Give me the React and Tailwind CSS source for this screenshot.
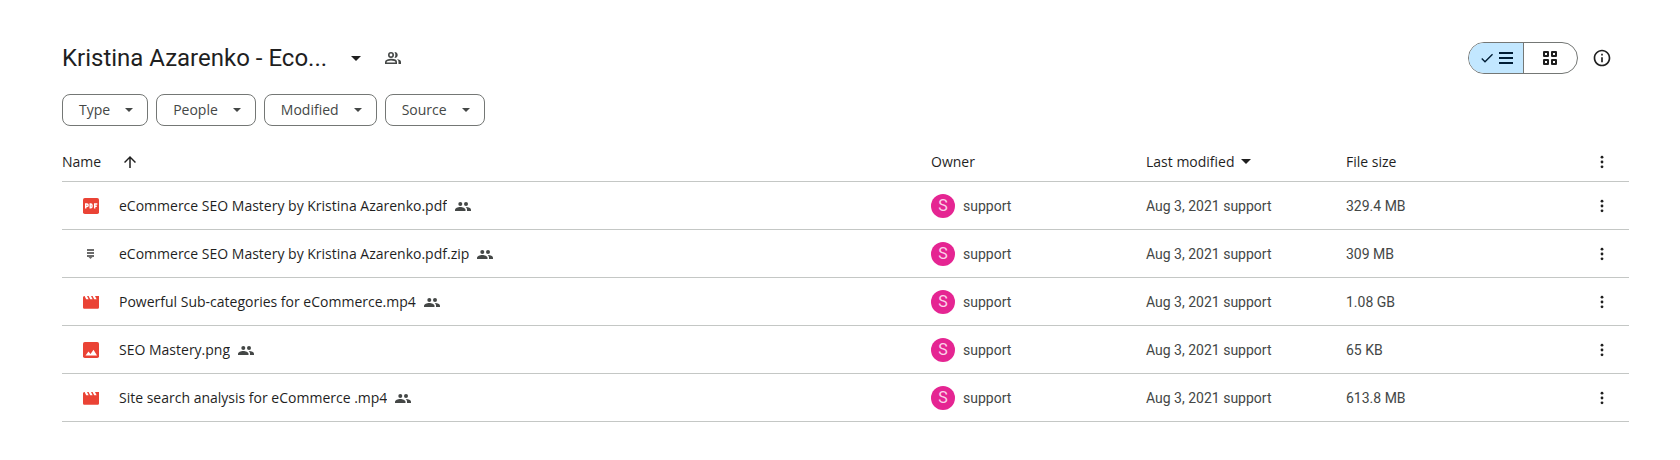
import { useState } from 'react';
import { MdArrowUpward, MdCheck, MdInfoOutline } from 'react-icons/md';

const filters = ['Type', 'People', 'Modified', 'Source'];

const files = [
  { name: 'eCommerce SEO Mastery by Kristina Azarenko.pdf', type: 'pdf', size: '329.4 MB' },
  { name: 'eCommerce SEO Mastery by Kristina Azarenko.pdf.zip', type: 'zip', size: '309 MB' },
  { name: 'Powerful Sub-categories for eCommerce.mp4', type: 'video', size: '1.08 GB' },
  { name: 'SEO Mastery.png', type: 'image', size: '65 KB' },
  { name: 'Site search analysis for eCommerce .mp4', type: 'video', size: '613.8 MB' },
];

function Caret({ className }) {
  return (
    <svg viewBox="0 0 10 5" className={className} fill="currentColor" aria-hidden="true">
      <path d="M0 0h10L5 5z" />
    </svg>
  );
}

function MoreIcon() {
  return (
    <svg viewBox="0 0 16 16" className="size-4" fill="currentColor" aria-hidden="true">
      <circle cx="8" cy="3.200" r="1.400" />
      <circle cx="8" cy="8" r="1.400" />
      <circle cx="8" cy="12.800" r="1.400" />
    </svg>
  );
}

function SharedIcon() {
  return (
    <svg viewBox="0 0 16 16" className="size-4 shrink-0 text-[#444746]" fill="currentColor" aria-hidden="true">
      <circle cx="5.300" cy="6" r="2" />
      <circle cx="11" cy="6" r="2" />
      <path d="M0 13v-1.200C0 10.100 2.800 9 5.200 9s5.300 1.100 5.300 2.800V13z" />
      <path d="M12 13v-1.400c0-.9-.5-1.800-1.300-2.500C13 8.900 16 10 16 11.800V13z" />
    </svg>
  );
}

function SharedOutlineIcon() {
  return (
    <svg viewBox="0 0 16 12" className="h-3 w-4 text-[#444746]" fill="none" stroke="currentColor" strokeWidth="1.600" aria-hidden="true">
      <circle cx="6" cy="3" r="2.200" />
      <path d="M.8 11.200V10c0-1.600 3-2.400 5.200-2.400s5.200.8 5.200 2.400v1.200z" />
      <path d="M9.500 0c1.900 0 3.200 1.300 3.200 3S11.400 6 9.500 6c1.200-1.700 1.200-4.300 0-6z" fill="currentColor" stroke="none" />
      <path d="M12 7c2.200.4 4 1.300 4 3v2h-2.500v-2c0-1.200-.5-2.200-1.500-3z" fill="currentColor" stroke="none" />
    </svg>
  );
}

function FileIcon({ type }) {
  if (type === 'pdf') {
    return (
      <svg viewBox="0 0 16 16" className="size-4 shrink-0" aria-hidden="true">
        <rect width="16" height="16" rx="1.800" fill="#ea4335" />
        <g fill="none" stroke="#fff" strokeWidth="1.400">
          <path d="M2.700 10.500V6h1.200a1.200 1.200 0 0 1 0 2.500H2.700" />
          <path d="M7.200 6h.6A1.200 1.200 0 0 1 9 7.200v1.400a1.200 1.200 0 0 1-1.200 1.200h-.6z" />
          <path d="M11.700 10.500V6h2.600M11.700 8.300h2.100" />
        </g>
      </svg>
    );
  }
  if (type === 'zip') {
    return (
      <svg viewBox="0 0 16 16" className="size-4 shrink-0" fill="#6b6b6b" aria-hidden="true">
        <path d="M4 3h7v2H4zM4 6h7v2H4zM4 9h7v2H9.500l-2 2-2-2H4z" />
      </svg>
    );
  }
  if (type === 'image') {
    return (
      <svg viewBox="0 0 16 16" className="size-4 shrink-0" aria-hidden="true">
        <rect width="16" height="16" rx="1.800" fill="#ea4335" />
        <path d="M2.500 13.500l3-4 2 2.500 3-4.300 3.500 5.800z" fill="#fff" />
      </svg>
    );
  }
  return (
    <svg viewBox="0 0 16 16" className="size-4 shrink-0" fill="#ea4335" aria-hidden="true">
      <path d="M1.600 2l1.600 3.200h2.400L4 2h1.600l1.600 3.200h2.400L8 2h1.600l1.600 3.200h2.400L12 2h4v11.200c0 .9-.7 1.600-1.600 1.600H1.600C.7 14.800 0 14.100 0 13.200V3.600C0 2.700.7 2 1.600 2z" />
    </svg>
  );
}

export default function App() {
  const [view, setView] = useState('list');

  return (
    <main className="bg-white pt-10 pr-[51px] pb-9 pl-[62px] font-['Roboto',sans-serif] text-sm text-[#1f1f1f]">
      <header className="flex h-9 items-center justify-between pr-[17px]">
        <div className="flex items-center">
          <h1 className="text-2xl leading-8">
            <button type="button" className="flex items-center gap-6">
              Kristina Azarenko - Eco...
              <Caret className="h-[5px] w-[10px]" />
            </button>
          </h1>
          <button type="button" aria-label="Shared" className="ml-6">
            <SharedOutlineIcon />
          </button>
        </div>
        <div className="flex items-center gap-3.5">
          <div className="flex h-8 w-[110px] overflow-hidden rounded-full border border-[#747775]">
            <button
              type="button"
              aria-label="List layout"
              aria-pressed={view === 'list'}
              onClick={() => setView('list')}
              className="flex flex-1 items-center justify-center gap-1 border-r border-[#747775] bg-[#c2e7ff] text-[#001d35]"
            >
              <MdCheck className="size-4" />
              <svg viewBox="0 0 14 12" className="h-3 w-3.5" fill="currentColor" aria-hidden="true">
                <path d="M0 0h14v2H0zM0 5h14v2H0zM0 10h14v2H0z" />
              </svg>
            </button>
            <button
              type="button"
              aria-label="Grid layout"
              aria-pressed={view === 'grid'}
              onClick={() => setView('grid')}
              className="flex flex-1 items-center justify-center"
            >
              <svg viewBox="0 0 14 14" className="size-3.5" fill="none" stroke="currentColor" strokeWidth="2" aria-hidden="true">
                <path d="M1 1h4v4H1zM9 1h4v4H9zM1 9h4v4H1zM9 9h4v4H9z" strokeLinejoin="round" />
              </svg>
            </button>
          </div>
          <button type="button" aria-label="View details">
            <MdInfoOutline className="size-5" />
          </button>
        </div>
      </header>

      <div className="mt-[18px] flex gap-2 font-['Open_Sans',sans-serif]">
        {filters.map((filter) => (
          <button
            key={filter}
            type="button"
            className="flex h-8 items-center gap-[15px] rounded-lg border border-[#747775] pr-3.5 pl-4 font-medium text-[#444746]"
          >
            {filter}
            <Caret className="h-1 w-2" />
          </button>
        ))}
      </div>

      <table className="mt-4 w-full table-fixed border-separate border-spacing-0 text-left [&_td]:border-b [&_td]:border-[#c4c7c5] [&_th]:border-b [&_th]:border-[#c4c7c5]">
        <thead className="font-['Open_Sans',sans-serif]">
          <tr className="h-10">
            <th className="font-medium">
              <button type="button" className="flex items-center gap-5">
                Name
                <MdArrowUpward className="size-[18px]" />
              </button>
            </th>
            <th className="w-[215px] font-medium">Owner</th>
            <th className="w-[200px] font-medium">
              <button type="button" className="flex items-center gap-1.5">
                Last modified
                <Caret className="h-[5px] w-[10px]" />
              </button>
            </th>
            <th className="w-[200px] font-medium">File size</th>
            <th className="w-[83px]">
              <button type="button" aria-label="More sorting options" className="ml-12 block">
                <MoreIcon />
              </button>
            </th>
          </tr>
        </thead>
        <tbody>
          {files.map((file) => (
            <tr key={file.name} className="h-12 text-[#444746]">
              <td>
                <div className="flex items-center pl-[21px] font-['Open_Sans',sans-serif] font-medium text-[#1f1f1f]">
                  <FileIcon type={file.type} />
                  <span className="mr-2 ml-5 truncate">{file.name}</span>
                  <SharedIcon />
                </div>
              </td>
              <td>
                <div className="flex items-center gap-2">
                  <span className="flex size-6 items-center justify-center rounded-full bg-[#e52592] text-base text-[#fbd3e9]" aria-hidden="true">
                    S
                  </span>
                  support
                </div>
              </td>
              <td>Aug 3, 2021 support</td>
              <td>{file.size}</td>
              <td>
                <button type="button" aria-label="More actions" className="ml-12 block text-[#1f1f1f]">
                  <MoreIcon />
                </button>
              </td>
            </tr>
          ))}
        </tbody>
      </table>
    </main>
  );
}
